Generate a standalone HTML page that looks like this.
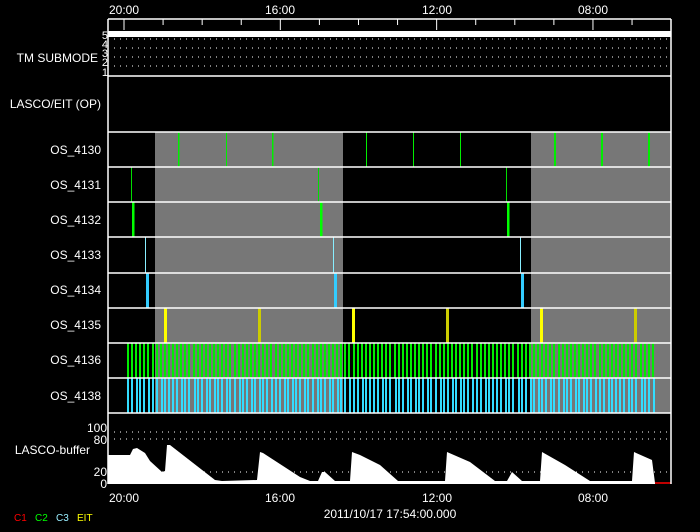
<!DOCTYPE html><html><head><style>
html,body{margin:0;background:#000;width:700px;height:532px;overflow:hidden}
svg{display:block}
text{font-family:"Liberation Sans",sans-serif;font-size:12px;fill:#fff}
</style></head><body>
<svg id="s" width="700" height="532" xmlns="http://www.w3.org/2000/svg">
<rect width="700" height="532" fill="#000"/>
<g id="g"></g>
<g text-anchor="end">
<text x="98" y="62">TM SUBMODE</text>
<text x="101" y="108">LASCO/EIT (OP)</text>
<text x="101" y="154">OS_4130</text>
<text x="101" y="189">OS_4131</text>
<text x="101" y="224">OS_4132</text>
<text x="101" y="259">OS_4133</text>
<text x="101" y="294">OS_4134</text>
<text x="101" y="329">OS_4135</text>
<text x="101" y="364">OS_4136</text>
<text x="101" y="400">OS_4138</text>
<text x="90" y="454">LASCO-buffer</text>
<text x="107" y="432">100</text>
<text x="107" y="444">80</text>
<text x="107" y="476">20</text>
<text x="107" y="488">0</text>
<g font-size="10"><text x="108" y="39" style="font-size:11px">5</text><text x="108" y="48" style="font-size:11px">4</text><text x="108" y="57" style="font-size:11px">3</text><text x="108" y="66" style="font-size:11px">2</text><text x="108" y="76" style="font-size:11px">1</text></g>
</g>
<g text-anchor="middle">
<text x="124" y="14">20:00</text><text x="280" y="14">16:00</text><text x="437" y="14">12:00</text><text x="593" y="14">08:00</text>
<text x="124" y="502">20:00</text><text x="280" y="502">16:00</text><text x="437" y="502">12:00</text><text x="593" y="502">08:00</text>
<text x="390" y="518">2011/10/17  17:54:00.000</text>
</g>
<g style="font-size:10px"><text x="14" y="521" style="fill:#f00;font-size:10px">C1</text><text x="35" y="521" style="fill:#0f0;font-size:10px">C2</text><text x="56" y="521" style="fill:#9ef;font-size:10px">C3</text><text x="77" y="521" style="fill:#ff0;font-size:10px">EIT</text></g>
</svg>
<script>
var g=document.getElementById('g'),h='';
function r(x,y,w,hh,c){h+='<rect x="'+x+'" y="'+y+'" width="'+w+'" height="'+hh+'" fill="'+c+'"/>';}
function l(x1,y1,x2,y2,c,w,d){h+='<line x1="'+x1+'" y1="'+y1+'" x2="'+x2+'" y2="'+y2+'" stroke="'+c+'" stroke-width="'+(w||1)+'"'+(d?' stroke-dasharray="'+d+'"':'')+'/>';}
// grey
r(155,132,188,281,'#777');r(531,132,140,281,'#777');
// submode
r(108,31,563,6,'#fff');
[39,48,57,66].forEach(function(y){l(114,y,671,y,'#fff',1,'1 5');});
[432,439,472].forEach(function(y){l(114,y,671,y,'#fff',1,'1 5');});
// 4130
[[178,1.5],[226,1],[272,1.5],[366,1],[413,1],[460,1],[554,2],[601,2],[648,2]].forEach(function(a){r(a[0],132,a[1],35,'#0e0');});
[131,318,506].forEach(function(x){r(x,167,1,35,'#0d0');});
[132,320,507].forEach(function(x){r(x,202,2.5,35,'#0f0');});
[145,333,520].forEach(function(x){r(x,237,1,36,'#8ef');});
[146,334,521].forEach(function(x){r(x,273,3,35,'#3cf');});
[[164,'#ff0'],[258,'#cc0'],[352,'#ff0'],[446,'#cc0'],[540,'#ff0'],[634,'#cc0']].forEach(function(a){r(a[0],308,3,35,a[1]);});
// stripes
for(var x=127;x<652;x+=4.1){r(Math.round(x),343,2,35,'#0e0');r(Math.round(x)+((x|0)%3==0?1:0),378,2,35,'#3df');}
// buffer
var pts=[[108,483],[108,455],[130,455],[133,449],[137,448],[145,453],[150,461],[162,472],[165,471],[167,445],[170,445],[215,480],[222,481],[257,480],[260,452],[263,453],[300,477],[310,481],[318,481],[322,472],[325,472],[335,481],[350,481],[352,452],[360,455],[380,465],[398,481],[445,481],[447,452],[470,462],[495,481],[507,481],[512,472],[522,481],[540,481],[542,452],[565,465],[590,481],[632,481],[634,452],[652,460],[655,483]];
h+='<polygon fill="#fff" points="'+pts.map(function(p){return p.join(',')}).join(' ')+'"/>';
l(655,483,671,483,'#f00',1.5);
// row lines
[76,132,167,202,237,273,308,343,378,413].forEach(function(y){l(108,y,671,y,'#fff',1.5);});
// frame
l(108,19,671,19,'#fff',1.5);l(108,19,108,484,'#fff',1.5);l(671,19,671,484,'#fff',1.5);l(108,483.5,655,483.5,'#fff',1);
for(var i=0;i<15;i++){var tx=124+i*39.08;if(tx>670)break;l(tx,19,tx,i%4==0?30:25,'#fff',1);}
g.innerHTML=h;
</script>
</body></html>
